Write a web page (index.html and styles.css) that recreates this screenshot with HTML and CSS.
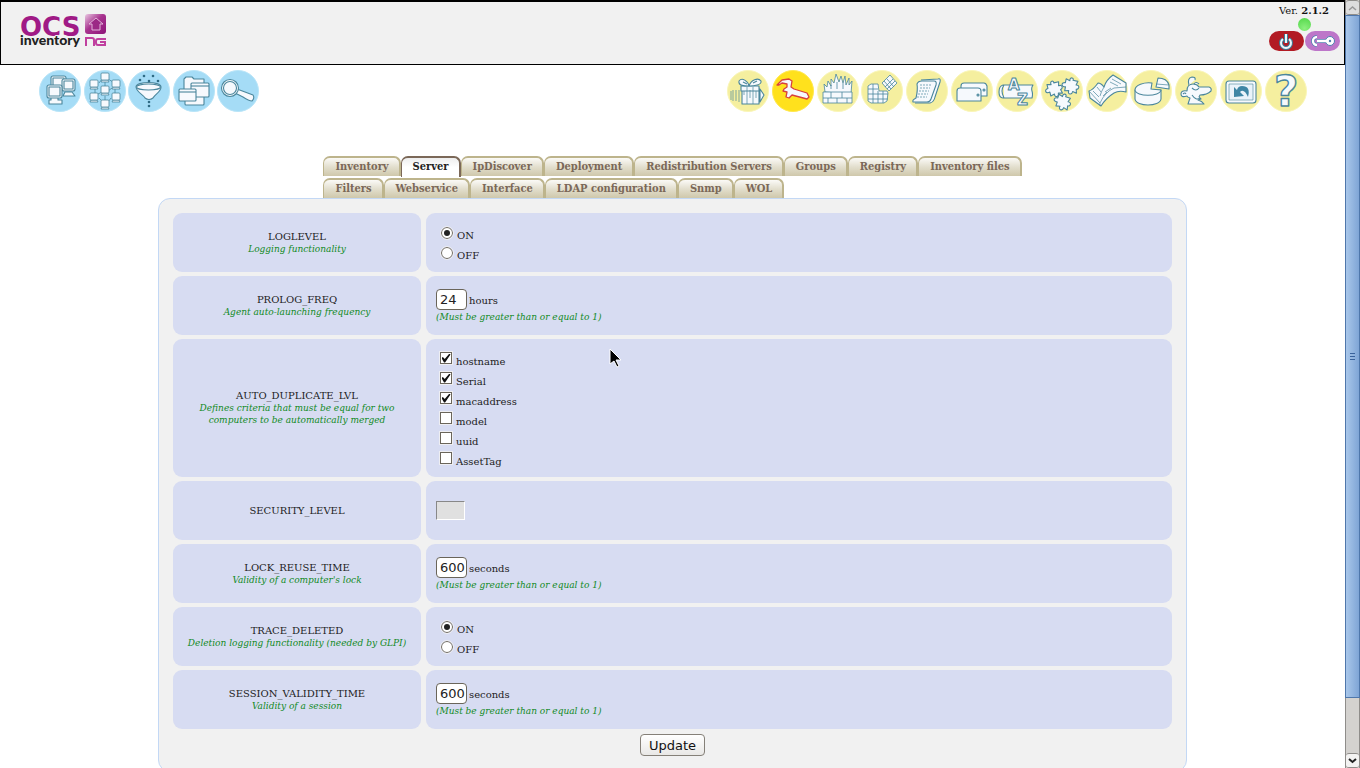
FILE: index.html
```html
<!DOCTYPE html>
<html lang="en">
<head>
<meta charset="utf-8">
<title>OCS Inventory</title>
<link rel="stylesheet" href="styles.css">
</head>
<body>
<div class="page">
  <header class="header">
    <a href="#" class="logo" aria-label="OCS Inventory NG">
      <svg width="90" height="36" viewBox="0 0 90 36">
        <defs><linearGradient id="lg" x1="0" y1="0" x2="1" y2="1"><stop offset="0" stop-color="#e9c8e2"/><stop offset=".45" stop-color="#a8348f"/><stop offset="1" stop-color="#8d1478"/></linearGradient></defs>
        <text x="0" y="23" class="logo-ocs">OCS</text>
        <text x="0" y="32" class="logo-inv">inventory</text>
        <rect x="65" y="1" width="21" height="20" rx="3" fill="url(#lg)"/>
        <path d="M76 5l7 6h-3v6h-8v-6h-3z" fill="#9c2a86" stroke="#e2b4da"/>
        <path d="M66 33v-8h6q2 0 2 2v6M86 26h-8q-2 0-2 2v2q0 2 2 2h7v-3h-5" fill="none" stroke="#c0409f" stroke-width="2"/>
      </svg>
    </a>
    <div class="status">
      <div class="version">Ver. <b>2.1.2</b></div>
      <span class="led"></span>
      <div class="session">
        <button class="pill pill-red" aria-label="Log out"><svg width="16" height="18" viewBox="0 0 16 18"><path d="M5 7a5 5 0 1 0 6 0M8 2v9" fill="none" stroke="#3a7f9b" stroke-width="4"/><path d="M5 7a5 5 0 1 0 6 0M8 2v9" fill="none" stroke="#eef6fa" stroke-width="2"/></svg></button>
        <button class="pill pill-purple" aria-label="Password"><svg width="27" height="14" viewBox="0 0 27 14"><path d="M8 3a4 4 0 1 0 0 8M8 7h11" fill="none" stroke="#4f7fb0" stroke-width="4"/><circle cx="21" cy="7" r="4.500" fill="#fff" stroke="#4f7fb0"/><path d="M8 3a4 4 0 1 0 0 8M8 7h11" fill="none" stroke="#fff" stroke-width="2.400"/><circle cx="21" cy="7" r="1.200" fill="#4f7fb0"/></svg></button>
      </div>
    </div>
  </header>

  <nav class="toolbar">
    <div class="tools tools-left">
      <a href="#" aria-label="All computers"><svg class="ico blue" viewBox="0 0 42 42"><circle class="disc" cx="21" cy="21" r="20.5"/><rect x="12" y="6" width="15" height="13" rx="2"/><rect x="14" y="8" width="11" height="9"/><path d="M26 22h7l3 4H24z"/><rect x="23" y="9" width="13" height="12" rx="2"/><rect x="25" y="11" width="9" height="8"/><path d="M12 27h7v3h4v4H10v-4h2z"/><rect x="8" y="15" width="15" height="13" rx="2"/><rect x="10" y="17" width="11" height="9"/></svg></a>
      <a href="#" aria-label="Repartition"><svg class="ico blue thin" viewBox="0 0 42 42"><defs><g id="pc"><path d="M-3 3h6l1 2h-8z"/><rect x="-4" y="-4" width="8" height="7" rx="1"/></g></defs><circle class="disc" cx="21" cy="21" r="20.5"/><path d="M15 13l3-4M24 9l5 3M11 18v5M31 18v5M21 12v4M21 26v4M15 28l4 4M27 28l-3 4M14 24l4-2M24 21l4-3"/><use href="#pc" x="21" y="7"/><use href="#pc" x="10" y="14"/><use href="#pc" x="32" y="14"/><use href="#pc" x="21" y="20"/><use href="#pc" x="10" y="27"/><use href="#pc" x="32" y="27"/><use href="#pc" x="21" y="34"/></svg></a>
      <a href="#" aria-label="Filter"><svg class="ico blue" viewBox="0 0 42 42"><circle class="disc" cx="21" cy="21" r="20.5"/><path d="M8 17c1 6 7 7 9 11q4 3 8 0c2-4 8-6 8-11 0-6-25-6-25 0z"/><ellipse cx="20.500" cy="17" rx="12" ry="3"/><g class="dots"><circle cx="12" cy="10" r="1.300"/><circle cx="16" cy="6" r="1.300"/><circle cx="21" cy="11" r="1.300"/><circle cx="25" cy="6" r="1.300"/><circle cx="30" cy="11" r="1.300"/><circle cx="21" cy="32" r="1.300"/><circle cx="21" cy="36" r="1.300"/></g></svg></a>
      <a href="#" aria-label="Directories"><svg class="ico blue" viewBox="0 0 42 42"><circle class="disc" cx="21" cy="21" r="20.5"/><path d="M11 9l2-2h6l2 2h10v15H11z"/><rect x="12" y="22" width="19" height="13" rx="1"/><rect x="18" y="13" width="18" height="14" rx="1"/><path d="M18 16h18"/><rect x="6" y="19" width="17" height="12" rx="1"/><path d="M6 22h17"/></svg></a>
      <a href="#" aria-label="Search"><svg class="ico blue" viewBox="0 0 42 42"><circle class="disc" cx="21" cy="21" r="20.5"/><path d="M20 19l16 6q2 3-1 6-3 0-9-4l-8-4z"/><circle cx="13" cy="18" r="8.500"/><circle cx="13" cy="18" r="6.500"/></svg></a>
    </div>
    <div class="tools tools-right">
      <a href="#" aria-label="Deployment"><svg class="ico" viewBox="0 0 42 42"><circle class="disc" cx="21" cy="21" r="20.5"/><path stroke-width=".7" d="M4 21v9M6 20v11M9 20v11M12 20v12"/><path d="M33 19l4 6-4 7zM15 18h17v16H15z"/><path d="M14 16h18v5H14z"/><path stroke-width=".7" d="M20 17v17M26 17v17M17 21v4M29 21v7M23 20v8"/><path d="M22 16c-4 0-11 0-10-5 3-4 9 0 10 5 2-6 9-9 12-5 1 4-7 5-12 5zM20 14l-4-2M26 13l4-2"/></svg></a>
      <a href="#" aria-label="Configuration"><svg class="ico active" viewBox="0 0 42 42"><circle class="disc" cx="21" cy="21" r="20.5"/><path d="M5 15l5-5 7-1 3 2-1 6 3 2 13 4 2 4-2 2-15-4-3 3-3-1 1-5-4-1 1-2 3-2v-3l-5-1-3 2z"/></svg></a>
      <a href="#" aria-label="Network"><svg class="ico thin" viewBox="0 0 42 42"><circle class="disc" cx="21" cy="21" r="20.5"/><path d="M8 22l-1-8 3 3 1-6 3 5 0-7 3 4 2-9 3 8 2-6 2 7 2-7 1 9 3-7 0 7 3-4-1 13z"/><path d="M14 19v-4M20 19v-7M26 19v-6"/><path d="M6 22h29v11H6zM6 28h29M14 22v6M25 22v6M11 28v5M20 28v5M30 28v5"/></svg></a>
      <a href="#" aria-label="Registry"><svg class="ico thin" viewBox="0 0 42 42"><circle class="disc" cx="21" cy="21" r="20.5"/><path d="M7 16l3-2h7l1 7h8l1 2-1 8-3 2H10l-3-2zM12 14v19M17 21v12M22 21v12M7 19h10M7 24h20M7 29h20"/><path d="M29 5l7 8-8 8-7-8zM26 9l7 8M32 9l-8 8M23 11l7 8M34 11l-8 8"/></svg></a>
      <a href="#" aria-label="Admin info"><svg class="ico" viewBox="0 0 42 42"><circle class="disc" cx="21" cy="21" r="20.500"/><path d="M15 10l17-1q3-1 2 3l-5 15q-1 5-5 6H9"/><path d="M11 14q1-3 5-3l12 0q3 0 2 4l-5 14q-1 3-4 3H7q-1-2 3-4 2-8 1-14z"/><path stroke-width=".7" stroke-dasharray="2 1" d="M14 15h11M14 18h10M13 21h10M12 24h10M11 27h10"/></svg></a>
      <a href="#" aria-label="Labels"><svg class="ico" viewBox="0 0 42 42"><circle class="disc" cx="21" cy="21" r="20.5"/><path d="M10 26V16q0-3 3-3h20q2 0 3 3v10z"/><path d="M6 31V21q0-3 3-3h18q3 0 3 3v10z"/><circle cx="27" cy="25" r="1"/><circle cx="33" cy="20" r="1"/></svg></a>
      <a href="#" aria-label="Dictionary"><svg class="ico" viewBox="0 0 42 42"><circle class="disc" cx="21" cy="21" r="20.5"/><path d="M7 15h30q-2 3-1 6 1 3 0 7H7q-4 0-4-6t4-7zM8 15q-2 3-2 6t2 7"/><text x="12" y="20" class="glyph-sm">A</text><text x="21" y="35" class="glyph-sm">Z</text></svg></a>
      <a href="#" aria-label="Plugins"><svg class="ico" viewBox="0 0 42 42"><defs><path id="pz" d="M-6-5l4 1c-1-4 4-4 3-1l5 0-1 4c4-1 4 4 1 4l1 4-4-1c0 4-5 4-4 0l-4 1 0-4c-5 1-5-4-1-4z"/></defs><circle class="disc" cx="21" cy="21" r="20.5"/><use href="#pz" transform="translate(13 18) rotate(-14)"/><use href="#pz" transform="translate(30 15) rotate(12)"/><use href="#pz" transform="translate(22 31) rotate(20)"/></svg></a>
      <a href="#" aria-label="Upload"><svg class="ico" viewBox="0 0 42 42"><circle class="disc" cx="21" cy="21" r="20.5"/><path d="M3 21q4-1 9-8 3 0 6 4 2-7 9-12l13 8v9q-7-2-12 1-8 5-13 13L4 28z"/><path stroke-width=".7" d="M3 21l11 12q5-11 14-15l12-1M14 36V33M18 17q-3 5-4 9M7 21l6 6M11 17l4 5M26 9l9 5M24 12l8 4M19 22l6-4M17 26l4-4"/></svg></a>
      <a href="#" aria-label="Statistics"><svg class="ico" viewBox="0 0 42 42"><circle class="disc" cx="21" cy="21" r="20.5"/><path d="M5 20v9c1 8 25 8 26 0v-9z"/><path d="M22 13c-8-1-17 2-17 7 1 7 25 7 26 0l-10-1z"/><path d="M28 8q9 0 11 7v4l-13-2z"/><path stroke-width=".7" d="M26 14l13 1"/></svg></a>
      <a href="#" aria-label="Users"><svg class="ico" viewBox="0 0 42 42"><circle class="disc" cx="21" cy="21" r="20.5"/><path d="M12 21q0-7 6-7 4 0 6 3l10 0q3 1 2 4-4 4-11 4l-1 2 2 2-3 1q4 1 6 4H13l2-6q-3-1-3-2-6 2-6-2t6-3z"/><path d="M14 15q-2-7 3-8 4 0 3 3M19 14q2-3 5 0M17 18q4 4 7 0M17 25q4 6 8 3M8 24q2-2 3 0"/></svg></a>
      <a href="#" aria-label="Return"><svg class="ico" viewBox="0 0 42 42"><circle class="disc" cx="21" cy="21" r="20.5"/><rect x="6" y="11" width="30" height="22" rx="3"/><rect x="9" y="14" width="24" height="16" fill="#eaf3fa" stroke-width=".6"/><path class="solid" d="M28 27q3-11-6-11-4 0-5 4l-3-3v10l10-1-4-4q4-4 8 5z"/></svg></a>
      <a href="#" aria-label="Help"><svg class="ico" viewBox="0 0 42 42"><circle class="disc" cx="21" cy="21" r="20.5"/><text x="9" y="36" class="glyph-lg">?</text></svg></a>
    </div>
  </nav>

  <div class="tabs">
    <div class="tab-row">
      <a href="#" class="tab">Inventory</a><a href="#" class="tab current">Server</a><a href="#" class="tab">IpDiscover</a><a href="#" class="tab">Deployment</a><a href="#" class="tab">Redistribution Servers</a><a href="#" class="tab">Groups</a><a href="#" class="tab">Registry</a><a href="#" class="tab">Inventory files</a>
    </div>
    <div class="tab-row">
      <a href="#" class="tab">Filters</a><a href="#" class="tab">Webservice</a><a href="#" class="tab">Interface</a><a href="#" class="tab">LDAP configuration</a><a href="#" class="tab">Snmp</a><a href="#" class="tab">WOL</a>
    </div>
  </div>

  <form class="panel">
    <div class="row">
      <div class="name">LOGLEVEL<em>Logging functionality</em></div>
      <div class="value">
        <div class="opt"><input type="radio" id="log-on" name="log" checked><label for="log-on">ON</label></div>
        <div class="opt"><input type="radio" id="log-off" name="log"><label for="log-off">OFF</label></div>
      </div>
    </div>
    <div class="row">
      <div class="name">PROLOG_FREQ<em>Agent auto-launching frequency</em></div>
      <div class="value">
        <div class="field"><input type="text" id="prolog" value="24"><label for="prolog">hours</label></div>
        <em>(Must be greater than or equal to 1)</em>
      </div>
    </div>
    <div class="row">
      <div class="name">AUTO_DUPLICATE_LVL<em>Defines criteria that must be equal for two computers to be automatically merged</em></div>
      <div class="value checks">
        <div class="opt"><input type="checkbox" id="c1" checked><label for="c1">hostname</label></div>
        <div class="opt"><input type="checkbox" id="c2" checked><label for="c2">Serial</label></div>
        <div class="opt"><input type="checkbox" id="c3" checked><label for="c3">macaddress</label></div>
        <div class="opt"><input type="checkbox" id="c4"><label for="c4">model</label></div>
        <div class="opt"><input type="checkbox" id="c5"><label for="c5">uuid</label></div>
        <div class="opt"><input type="checkbox" id="c6"><label for="c6">AssetTag</label></div>
      </div>
    </div>
    <div class="row">
      <label class="name" for="security">SECURITY_LEVEL</label>
      <div class="value"><input type="text" id="security" class="off" disabled></div>
    </div>
    <div class="row">
      <div class="name">LOCK_REUSE_TIME<em>Validity of a computer's lock</em></div>
      <div class="value">
        <div class="field"><input type="text" id="lock" value="600"><label for="lock">seconds</label></div>
        <em>(Must be greater than or equal to 1)</em>
      </div>
    </div>
    <div class="row">
      <div class="name">TRACE_DELETED<em>Deletion logging functionality (needed by GLPI)</em></div>
      <div class="value">
        <div class="opt"><input type="radio" id="tr-on" name="trace" checked><label for="tr-on">ON</label></div>
        <div class="opt"><input type="radio" id="tr-off" name="trace"><label for="tr-off">OFF</label></div>
      </div>
    </div>
    <div class="row">
      <div class="name">SESSION_VALIDITY_TIME<em>Validity of a session</em></div>
      <div class="value">
        <div class="field"><input type="text" id="session" value="600"><label for="session">seconds</label></div>
        <em>(Must be greater than or equal to 1)</em>
      </div>
    </div>
    <button type="button" class="update">Update</button>
  </form>
</div>

<div class="scrollbar" aria-hidden="true">
  <div class="arrow dim"><svg width="9" height="6" viewBox="0 0 9 6"><path d="M1 5l3.500-3L8 5" fill="none" stroke="#999" stroke-width="1.500"/></svg></div>
  <div class="track"><div class="thumb"><i></i><i></i><i></i></div></div>
  <div class="arrow"><svg width="9" height="6" viewBox="0 0 9 6"><path d="M1 1l3.500 3L8 1" fill="none" stroke="#222" stroke-width="2"/></svg></div>
</div>

<svg class="pointer" width="13" height="20" viewBox="0 0 13 20"><path d="M1 1v15l4-3 3 6 2-1-3-6h5z" fill="#000" stroke="#fff"/></svg>
</body>
</html>
```
FILE: styles.css
```css
* { box-sizing: border-box; }

body {
  margin: 0;
  height: 100vh;
  display: flex;
  overflow: hidden;
  background: #fff;
  color: #222;
  font: 10px/12px "DejaVu Serif", serif;
}

.page { flex: 1; min-width: 0; overflow: hidden; }

.header {
  display: flex;
  justify-content: space-between;
  height: 65px;
  padding-left: 19px;
  background: #f1f1f1;
  border: 1px solid #000;
  border-top-width: 2px;
}
.logo { padding-top: 11px; }
.logo svg { display: block; overflow: visible; }
.logo-ocs { font: bold 26px "DejaVu Sans", sans-serif; fill: #a01a86; }
.logo-inv { font: 900 14px Lato, sans-serif; fill: #222; stroke: #f1f1f1; stroke-width: 2px; paint-order: stroke; }

.status { display: flex; flex-direction: column; align-items: center; width: 80px; padding-top: 3px; }
.version { font-size: 10px; line-height: 12px; color: #111; }
.led { width: 13px; height: 13px; margin-top: 1px; border-radius: 50%; background: radial-gradient(circle at 50% 80%, #8df07f, #4fd646); }
.session { display: flex; gap: 1px; }
.pill {
  display: flex;
  align-items: center;
  justify-content: center;
  width: 35px;
  height: 20px;
  padding: 0;
  border: 0;
  border-radius: 10px;
}
.pill-red { background: #b21b24; }
.pill-purple { background: #bd76c9; }

.toolbar { display: flex; justify-content: space-between; padding: 5px 38px 0 39px; }
.tools { display: flex; justify-content: space-between; }
.tools-left { width: 220px; }
.tools-right { width: 580px; }
.ico { display: block; width: 42px; height: 42px; overflow: visible; fill: #f6f9fd; stroke: #4a869c; stroke-width: 1.1; stroke-linejoin: round; }
.ico.thin { stroke-width: .8; }
.ico .disc { fill: #f5ef9f; stroke: #faf6b8; stroke-width: 1; }
.ico.blue .disc { fill: #a5dcf6; stroke: #b9e5f8; }
.ico.active { stroke: #d8413c; stroke-width: 1.3; }
.ico.active .disc { fill: #ffe11d; stroke: #ffe84e; }
.dots { fill: #2f6b85; stroke: none; }
.ico .solid { fill: #3f86a5; stroke: none; }
.glyph-sm { font: bold 15px "DejaVu Sans", sans-serif; stroke-width: 1px; }
.glyph-lg { font: bold 42px "DejaVu Sans", sans-serif; stroke-width: 1.4; }

.tabs { width: fit-content; margin: 44px auto 0; }
.tab-row { display: flex; height: 22px; }
.tab-row + .tab-row { height: 20px; }
.tab {
  height: 20px;
  padding: 3px 10px 0 11px;
  border: 1px solid #bdb48c;
  border-top-width: 2px;
  border-right-width: 2px;
  border-bottom: 0;
  border-radius: 7px 7px 0 0;
  background: linear-gradient(#fbfaf7, #e2decd 50%, #cfc8ab);
  color: #7b6858;
  font-family: "DejaVu Serif Condensed", "DejaVu Serif", serif;
  font-weight: bold;
  font-size: 11px;
  text-decoration: none;
  white-space: nowrap;
}
.tab.current { height: 21px; background: linear-gradient(#eee, #fff 50%); border-color: #7b6858; color: #222; }

.panel {
  display: flex;
  flex-direction: column;
  gap: 4px;
  width: 76.5%;
  margin: 0 auto;
  padding: 14px 14px 15px;
  border: 1px solid #c3d8f5;
  border-radius: 12px;
  background: #f1f1f1;
}
.row { display: grid; grid-template-columns: 248fr 746fr; gap: 5px; min-height: 59px; }
.name, .value {
  display: flex;
  flex-direction: column;
  justify-content: center;
  padding: 9px 10px;
  border-radius: 9px;
  background: #d7dcf2;
}
.name { text-align: center; }
em { color: #118a1e; font-family: "DejaVu Serif Condensed", "DejaVu Serif", serif; }

.opt { display: flex; align-items: center; gap: 4px; height: 20px; padding-left: 4px; }
.opt label { padding-top: 6px; }
.checks .opt label { padding-top: 8px; }
.opt input {
  appearance: none;
  display: grid;
  place-items: center;
  width: 12px;
  height: 12px;
  margin: 0;
  border: 1px solid #6a655a;
  background: #fff;
  outline: 1px solid #eeeef2;
}
.opt input[type="radio"] { border-radius: 50%; margin-left: 1px; }
.opt input[type="radio"]:checked::after { content: ""; width: 6px; height: 6px; border-radius: 50%; background: #222; }
.opt input[type="checkbox"]:checked::after {
  content: "";
  width: 9px;
  height: 9px;
  background: #111;
  clip-path: polygon(0 50%, 15% 38%, 36% 62%, 88% 0, 100% 10%, 40% 100%, 28% 100%);
}

.field { display: flex; align-items: center; gap: 2px; height: 22px; }
.field input {
  width: 31px;
  height: 21px;
  margin: 0;
  padding: 0 0 0 3px;
  border: 1px solid #6a655a;
  border-radius: 4px;
  background: #fff;
  color: #222;
  font: 13px "DejaVu Sans", sans-serif;
}
.field label { padding-top: 2px; }
.off { width: 29px; height: 19px; margin: 0; padding: 0; border: 1px solid; border-color: #888 #fff #fff #888; background: #e0e0e0; }

.update {
  align-self: center;
  height: 22px;
  margin-top: 1px;
  padding: 0 8px;
  border: 1px solid #858078;
  border-radius: 4px;
  background: linear-gradient(#fff, #e9e8e6);
  color: #111;
  font: 13px "DejaVu Sans", sans-serif;
}

.scrollbar { display: flex; flex-direction: column; width: 15px; border: 1px solid #8f8d8a; border-width: 0 1px; background: #d4d2cf; }
.arrow { display: grid; place-items: center; height: 15px; border: 1px solid #8f8d8a; border-width: 1px 0; border-radius: 3px; background: #f4f3f2; }
.arrow.dim { background: #ddd; }
.track { flex: 1; }
.thumb {
  display: flex;
  flex-direction: column;
  align-items: center;
  justify-content: center;
  gap: 2px;
  height: 92.5%;
  margin: 0 -1px;
  border: 1px solid #4f77ab;
  background: linear-gradient(90deg, #a9c7ea, #7fa5d6);
}
.thumb i { width: 5px; height: 1px; background: #3a629b; }

.pointer { position: absolute; left: 609px; top: 348px; }
```
